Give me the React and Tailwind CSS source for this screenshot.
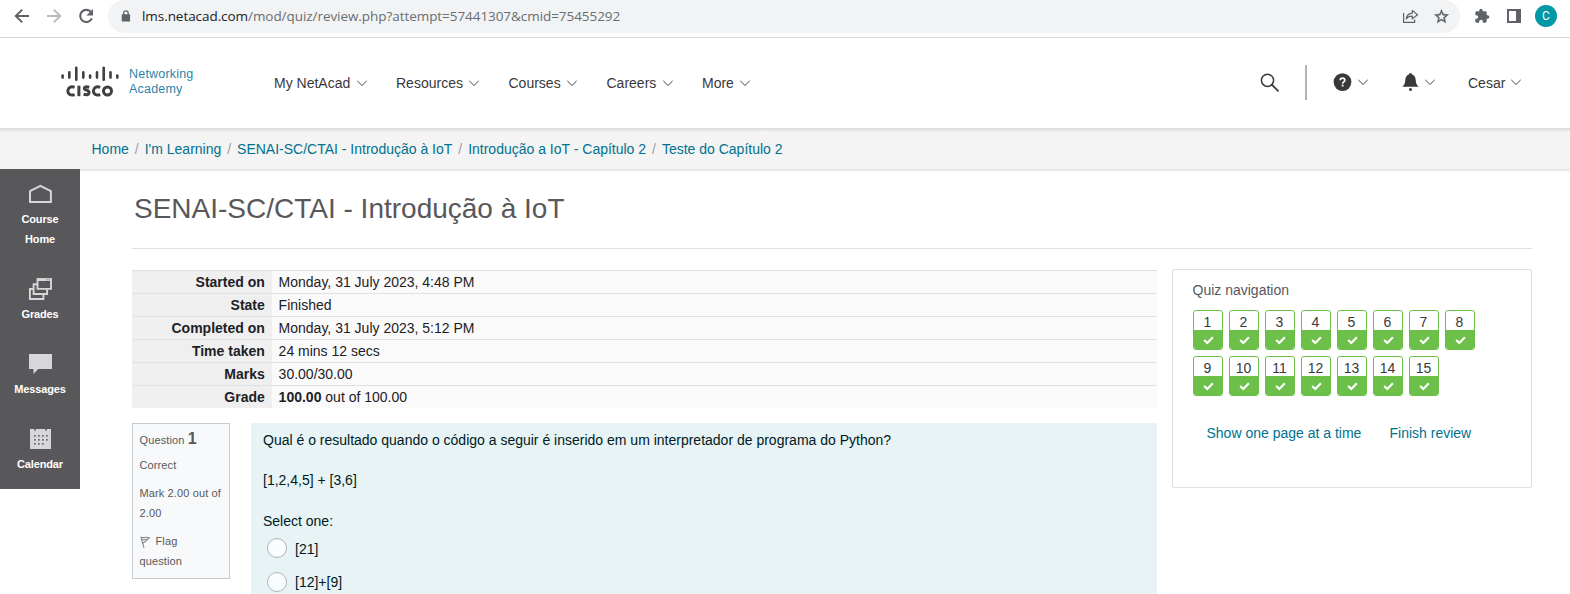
import React from "react";

const Chevron = () => (
  <svg className="block shrink-0" width="10" height="7" viewBox="0 0 10 7" fill="none" stroke="#454547" strokeWidth="1">
    <path d="M0.300 0.900 L5 5.500 L9.700 0.900" />
  </svg>
);

function BrowserBar() {
  return (
    <div className="flex h-[38px] items-start border-b border-[#d5d7da] bg-white">
      <svg className="ml-[13px] mt-[7px] shrink-0" width="18" height="18" viewBox="0 0 18 18" fill="none" stroke="#5f6368" strokeWidth="2">
        <path d="M16 9H3.5M9.2 2.6 2.8 9l6.4 6.4" />
      </svg>
      <svg className="ml-[14px] mt-[7px] shrink-0" width="18" height="18" viewBox="0 0 18 18" fill="none" stroke="#babcbe" strokeWidth="2">
        <path d="M2 9h12.5M8.8 2.6 15.2 9l-6.4 6.4" />
      </svg>
      <svg className="ml-[13px] mt-[6px] shrink-0" width="20" height="20" viewBox="0 0 20 20" fill="none">
        <path d="M15.9 12.4A6.1 6.1 0 1 1 14.6 5.6" stroke="#5f6368" strokeWidth="2.1" />
        <path d="M17 3v6.6h-6.6z" fill="#5f6368" />
      </svg>
      <div className="ml-[12px] flex h-[33px] w-[1352px] items-center rounded-b-[17px] rounded-t-[16px] bg-[#f1f3f4]">
        <svg className="ml-[13px] mt-[-2px] shrink-0" width="10" height="12" viewBox="0 0 10 12">
          <rect x="0.7" y="4.2" width="8.4" height="7.4" rx="0.9" fill="#5f6368" />
          <path d="M2.6 5V3.1a2.3 2.3 0 0 1 4.6 0V5" fill="none" stroke="#5f6368" strokeWidth="1.3" />
        </svg>
        <div className="ml-[11px] mt-[-2px] w-[1258px] whitespace-nowrap font-['Open_Sans',sans-serif] text-[13.5px] leading-[20px] tracking-[-0.06px] text-[#6a6e72]">
          <span className="text-[#202124]">lms.netacad.com</span>/mod/quiz/review.php?attempt=57441307&amp;cmid=75455292
        </div>
        <svg className="ml-[2px] mt-[-2px] shrink-0" width="17" height="16" viewBox="0 0 17 16" fill="none" stroke="#5f6368" strokeWidth="1.2" strokeLinejoin="round">
          <path d="M1.6 5v9.4h11V11.6" />
          <path d="M4.3 10.8c.5-3.600 2.400-5.400 6-5.600V2.400l5.200 4.300-5.200 4.200V8.200c-2.800-.1-4.600.7-6 2.600z" />
        </svg>
        <svg className="ml-[14px] mt-[-1px] shrink-0" width="17" height="17" viewBox="0 0 24 24" fill="#5f6368">
          <path d="M22 9.240l-7.190-.62L12 2 9.190 8.630 2 9.240l5.460 4.730L5.820 21 12 17.270 18.180 21l-1.630-7.030L22 9.240zM12 15.400l-3.760 2.270 1-4.280-3.320-2.880 4.380-.38L12 6.100l1.710 4.040 4.380.38-3.320 2.880 1 4.280L12 15.400z" stroke="#5f6368" strokeWidth="0.6" />
        </svg>
      </div>
      <svg className="ml-[14px] mt-[8px] mr-[1px] shrink-0" width="16" height="16" viewBox="0 0 24 24" fill="#5f6368">
        <path d="M20.500 11H19V7c0-1.100-.9-2-2-2h-4V3.500C13 2.120 11.880 1 10.500 1S8 2.120 8 3.500V5H4c-1.100 0-1.990.9-1.990 2v3.800H3.500c1.490 0 2.700 1.210 2.700 2.700s-1.210 2.700-2.700 2.700H2V20c0 1.100.9 2 2 2h3.800v-1.500c0-1.490 1.210-2.700 2.700-2.700 1.490 0 2.700 1.210 2.700 2.700V22H17c1.100 0 2-.9 2-2v-4h1.500c1.380 0 2.500-1.120 2.500-2.500S21.880 11 20.500 11z" />
      </svg>
      <svg className="ml-[16px] mt-[9px] shrink-0" width="14" height="14" viewBox="0 0 14 14">
        <path d="M0 0h14v14H0zM2 2v10h7V2z" fill="#5f6368" fillRule="evenodd" />
      </svg>
      <div className="ml-[14px] mt-[5px] flex h-[22px] w-[22px] shrink-0 items-center justify-center rounded-full bg-[#0097a7] font-['Roboto',sans-serif] text-[12px] leading-none text-white">
        C
      </div>
    </div>
  );
}

function Logo() {
  return (
    <div className="ml-[61px] mt-[27px] flex">
      <div className="w-[59px]">
        <svg className="block" width="59" height="18" viewBox="0 0 59 18" stroke="#3f4042" strokeWidth="2.600" strokeLinecap="round">
          <path d="M1.600 10.600v2M8.300 7.400v5.200M15.300 2.700v12M22.300 7.400v5.200M29.100 10.600v2M36 7.400v5.200M42.700 2.700v12M49.500 7.400v5.200M56.300 10.600v2" />
        </svg>
        <svg className="ml-[5px] mt-[2px] block" width="48" height="13" viewBox="0 0 48 13" fill="none" stroke="#3f4042" strokeWidth="3">
          <path d="M8.600 2.300C4.500.8 1.800 3 1.800 6s2.900 5 6.800 3.600" />
          <path d="M12.900 0.700v10.500" />
          <path d="M23.300 2.300c-3.400-1-5-.5-5 1 0 2.300 4.800 1.500 4.800 4.100 0 2.300-2.300 2.800-5.500 1.900" />
          <path d="M34.200 2.300c-4.100-1.500-6.800.7-6.800 3.700s2.900 5 6.800 3.600" />
          <circle cx="41.500" cy="6" r="4" />
        </svg>
      </div>
      <div className="ml-[9px] mt-[2px] w-[80px] whitespace-nowrap text-[12.5px] leading-[15px] tracking-[0.2px] text-[#2b85ab]">
        <div>Networking</div>
        <div>Academy</div>
      </div>
    </div>
  );
}

const NAV = [
  ["My NetAcad", "w-[76px]"],
  ["Resources", "w-[66.500px]"],
  ["Courses", "w-[52px]"],
  ["Careers", "w-[49.500px]"],
  ["More", "w-[31.500px]"],
];

function Header() {
  return (
    <header className="flex h-[90px] items-start bg-white text-[#39393b]">
      <Logo />
      <nav className="ml-[65px] mt-[35px] flex w-[987px] shrink-0 gap-[29px]">
        {NAV.map(([label, w]) => (
          <div key={label} className="flex items-center gap-[6.500px] whitespace-nowrap pr-[0.500px] text-[14px] leading-[20px]">
            <span className={w}>{label}</span>
            <Chevron />
          </div>
        ))}
      </nav>
      <svg className="ml-[-1px] mt-[35px] shrink-0" width="20" height="20" viewBox="0 0 20 20" fill="none" stroke="#39393b" strokeWidth="1.500">
        <circle cx="7.500" cy="7.300" r="6.100" />
        <path d="M11.800 11.700 18.500 18.300" strokeWidth="1.800" />
      </svg>
      <div className="ml-[25px] mt-[27px] h-[35px] w-[2px] shrink-0 bg-[#b3b3b5]" />
      <svg className="ml-[26px] mt-[35px] shrink-0" width="19" height="19" viewBox="0 0 19 19">
        <circle cx="9.500" cy="9.100" r="8.900" fill="#39393b" />
        <path d="M7.200 7.300c0-1.300.9-2.100 2.300-2.100s2.300.8 2.300 2c0 1.700-2.200 1.700-2.200 3.500" fill="none" stroke="#fff" strokeWidth="1.700" />
        <rect x="8.700" y="11.700" width="1.800" height="1.800" fill="#fff" />
      </svg>
      <div className="ml-[6px] mt-[41px]"><Chevron /></div>
      <svg className="ml-[34px] mt-[35px] shrink-0" width="17" height="19" viewBox="0 0 17 19" fill="#39393b">
        <path d="M8.500 0.200c1 0 1.500.5 1.600 1.300 2.300.8 3.400 2.800 3.600 5.500.2 3.300.9 5.100 3.100 6.800H.2c2.200-1.700 2.900-3.500 3.100-6.800.2-2.700 1.300-4.700 3.600-5.500.1-.8.600-1.300 1.600-1.300z" />
        <circle cx="8.500" cy="16.500" r="1.500" />
      </svg>
      <div className="ml-[6px] mt-[41px]"><Chevron /></div>
      <div className="ml-[33px] mt-[35px] w-[37px] text-[14px] leading-[20px]">Cesar</div>
      <div className="ml-[6px] mt-[41px]"><Chevron /></div>
    </header>
  );
}

const CRUMBS = ["Home", "I'm Learning", "SENAI-SC/CTAI - Introdução à IoT", "Introdução a IoT - Capítulo 2", "Teste do Capítulo 2"];

function Breadcrumb() {
  return (
    <div className="flex h-[41px] flex-col justify-between bg-[#f4f4f4]">
      <div className="h-[4px] bg-gradient-to-b from-[#d9d9d9] to-[#f4f4f4]" />
      <div className="mb-[10px] flex whitespace-nowrap pl-[91.500px] text-[14px] leading-[20px] text-[#00718f]">
        {CRUMBS.map((c, i) => (
          <React.Fragment key={c}>
            {i > 0 && <span className="w-[15.800px] text-center text-[#9e9ea2]">/</span>}
            <span>{c}</span>
          </React.Fragment>
        ))}
      </div>
    </div>
  );
}

function SideItem({ icon, label, className }) {
  return (
    <div className={"flex flex-col items-center text-center text-[11px] font-bold leading-[20px] tracking-[-0.15px] text-white " + className}>
      {icon}
      <div>{label}</div>
    </div>
  );
}

function Sidebar() {
  return (
    <aside className="h-[320px] w-[80px] shrink-0 bg-[#58585b]">
      <SideItem
        className="h-[92px] pt-[15px]"
        label={<>Course<br />Home</>}
        icon={
          <svg className="mb-[5px] shrink-0" width="24" height="20" viewBox="0 0 24 20" fill="none" stroke="#d7d7d9" strokeWidth="2">
            <path d="M2 18V7.200L12.400 1.800 22.900 7.200V18z" />
          </svg>
        }
      />
      <SideItem
        className="h-[76px] pt-[16px]"
        label="Grades"
        icon={
          <svg className="mb-[3px] shrink-0" width="24" height="24" viewBox="0 0 24 24" fill="#58585b" stroke="#d7d7d9" strokeWidth="1.900">
            <path d="M1.900 12h13.500v10H1.900z" />
            <path d="M5.600 7.200h13.500v9.800H5.600z" />
            <path d="M9.500 2.300h13.500v9.600H9.500z" />
            <path d="M9 2.700h14.900" strokeWidth="2.600" />
            <path d="M18.500 2.800h1.200M20.800 2.800h1.200" stroke="#58585b" strokeWidth="0.800" />
          </svg>
        }
      />
      <SideItem
        className="h-[75px] pt-[16px]"
        label="Messages"
        icon={
          <svg className="mb-[4px] shrink-0" width="24" height="22" viewBox="0 0 24 22" fill="#d7d7d9">
            <path d="M1 1h23v15H10.300L5.500 21V16H1z" />
          </svg>
        }
      />
      <SideItem
        className="h-[70px] pt-[17px]"
        label="Calendar"
        icon={
          <svg className="mb-[5px] shrink-0" width="22" height="20" viewBox="0 0 22 20">
            <rect x="1" width="21" height="20" fill="#d7d7d9" />
            <g fill="#6a6a6d">
              <path d="M5 0h2v1.500H5zM16 0h2v1.500h-2z" />
              {[7, 11, 15].map((y, r) =>
                [5, 9, 13, 17].map((x, c) =>
                  r === 2 && c === 3 ? null : <rect key={x + "-" + y} x={x} y={y - 1} width="1.700" height="1.700" />
                )
              )}
            </g>
          </svg>
        }
      />
    </aside>
  );
}

const ROWS = [
  ["Started on", "Monday, 31 July 2023, 4:48 PM"],
  ["State", "Finished"],
  ["Completed on", "Monday, 31 July 2023, 5:12 PM"],
  ["Time taken", "24 mins 12 secs"],
  ["Marks", "30.00/30.00"],
  ["Grade", <><b>100.00</b> out of 100.00</>],
];

function Summary() {
  return (
    <div className="text-[14px] leading-[20px] text-[#1d2125]">
      {ROWS.map(([k, v]) => (
        <div key={k} className="flex h-[23px] border-t border-[#dee2e6] bg-[#fafafa]">
          <div className="w-[140px] bg-[#efefef] pr-[7.200px] pt-[1px] text-right font-bold">{k}</div>
          <div className="pl-[6.600px] pt-[1px]">{v}</div>
        </div>
      ))}
    </div>
  );
}

function Question() {
  return (
    <div className="mt-[15px] flex items-start">
      <div className="h-[156px] w-[98px] shrink-0 border border-[#c4cbd3] bg-[#f8f9fa] pl-[6.500px] text-[11px] leading-[20px] tracking-[0.12px] text-[#58585b]">
        <div className="mt-[5px] h-[20px] leading-[20px]">
          Question <b className="text-[16px]">1</b>
        </div>
        <div className="mt-[6px]">Correct</div>
        <div className="mt-[8px] whitespace-nowrap">Mark 2.00 out of<br />2.00</div>
        <div className="mt-[8px]">
          <div className="flex items-center">
            <svg className="ml-[0.500px] mr-[5.500px] mt-[2px]" width="10" height="12" viewBox="0 0 10 12" fill="none" stroke="#858588" strokeWidth="1.100">
              <path d="M0.800 0.600 4 11.800M1 1.200C3 2.600 5 .3 9.500 1.800 7 3 7.500 4.600 3 7M2.500 3.500c1.500.8 2.500-.5 4-.2" />
            </svg>
            Flag
          </div>
          question
        </div>
      </div>
      <div className="ml-[21px] h-[171px] w-[906px] bg-[#e7f3f5] pl-[12px] text-[14px] leading-[20px] text-[#001a1e]">
        <div className="mt-[7px]">Qual é o resultado quando o código a seguir é inserido em um interpretador de programa do Python?</div>
        <div className="mt-[20px]">[1,2,4,5] + [3,6]</div>
        <div className="mt-[21px]">Select one:</div>
        {["[21]", "[12]+[9]"].map((o, i) => (
          <div key={o} className={"flex h-[20px] items-start pl-[4px] " + (i ? "mt-[14px]" : "mt-[7px]")}>
            <span className="h-[20px] w-[20px] rounded-full border border-[#aeb3b6] bg-[#fafdfd]" />
            <span className={"ml-[8px] leading-[20px] " + (i ? "" : "mt-[1px]")}>{o}</span>
          </div>
        ))}
      </div>
    </div>
  );
}

function QuizNav() {
  return (
    <div className="h-[219px] w-[360px] shrink-0 rounded-[2px] border border-[#dfdfdf] pl-[20px] text-[14px] leading-[20px]">
      <div className="ml-[-0.500px] mt-[10px] text-[#58585b]">Quiz navigation</div>
      <div className="mt-[10px] flex w-[300px] flex-wrap gap-[6px] text-[#39393b]">
        {Array.from({ length: 15 }, (_, i) => (
          <div key={i} className="h-[40px] w-[30px] overflow-hidden rounded-[3px] border border-[#6cc04a] bg-white text-center">
            <div className="h-[19px] pr-[1px] pt-[1px] leading-[20px]">{i + 1}</div>
            <div className="flex h-[20px] items-center justify-center bg-[#6cc04a]">
              <svg width="11" height="9" viewBox="0 0 11 9" fill="none" stroke="#fff" strokeWidth="2.200">
                <path d="M1.200 4 4.300 7 9.900 1.300" />
              </svg>
            </div>
          </div>
        ))}
      </div>
      <div className="mt-[27px] flex whitespace-nowrap pl-[13.500px] text-[#00718f]">
        <span className="w-[183px]">Show one page at a time</span>
        <span>Finish review</span>
      </div>
    </div>
  );
}

export default function App() {
  return (
    <div className="h-[594px] w-[1570px] overflow-hidden bg-white font-['Liberation_Sans',Arial,sans-serif]">
      <BrowserBar />
      <Header />
      <Breadcrumb />
      <div className="flex">
        <Sidebar />
        <div className="flex-1">
          <div className="h-[3px] bg-gradient-to-b from-[#dedede] to-white" />
          <main className="pl-[52px]">
            <h1 className="ml-[2px] mt-[19px] text-[28px] leading-[36px] text-[#58585b]">SENAI-SC/CTAI - Introdução à IoT</h1>
            <div className="mt-[21px] w-[1400px] border-t border-[#dedfe0]" />
            <div className="mt-[20px] flex items-start">
              <div className="mt-[1px] w-[1025px]">
                <Summary />
                <Question />
              </div>
              <div className="ml-[15px]">
                <QuizNav />
              </div>
            </div>
          </main>
        </div>
      </div>
    </div>
  );
}
